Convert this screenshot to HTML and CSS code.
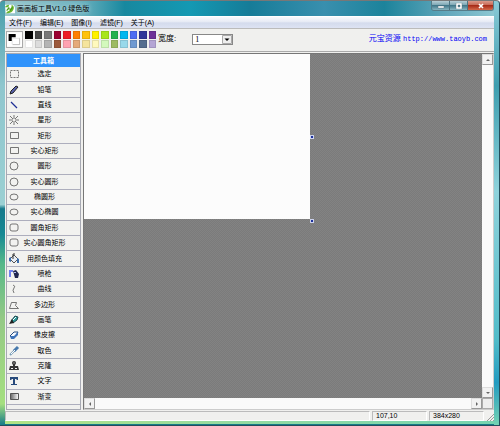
FILE: index.html
```html
<!DOCTYPE html>
<html lang="zh-CN">
<head>
<meta charset="utf-8">
<title>画画板工具V1.0 绿色版</title>
<link rel="stylesheet" href="styles.css">
</head>
<body>
<div class="window">
  <header class="titlebar">
    <svg class="logo" viewBox="0 0 12 12" aria-hidden="true"><path fill="#fff" d="M0 1h10l2 3v7H1z"/><path fill="#69b52d" d="M0 4q1-3 5-3L4 4H0zM8 1q4 2 2 6T4 11H1l2-2q5-1 5-8"/><path fill="none" stroke="#4c9b18" stroke-width="1.3" d="M2 8l3-4M6 8l3-4M3 6h5"/></svg>
    <h1 class="title">画画板工具V1.0 绿色版</h1>
    <div class="controls">
      <button class="control" aria-label="最小化"><svg viewBox="0 0 8 6"><path class="glyph" d="M1 3h6v2H1z"/></svg></button>
      <button class="control" aria-label="最大化"><svg viewBox="0 0 8 6"><path class="glyph" fill-rule="evenodd" d="M1 0h6v6H1zM3 2v2h2V2z"/></svg></button>
      <button class="control close" aria-label="关闭"><svg viewBox="0 0 8 6"><path stroke="#fff" stroke-width="1.6" d="M2 1l4 4M6 1L2 5"/></svg></button>
    </div>
  </header>
  <div class="client">
    <nav class="menu">
      <button>文件(F)</button><button>编辑(E)</button><button>图像(I)</button><button>滤镜(F)</button><button>关于(A)</button>
    </nav>
    <div class="toolbar">
      <svg class="current" viewBox="0 0 19 18" aria-hidden="true"><path fill="#fff" d="M0 0h19v18H0z"/><path fill="none" stroke="#aaa" d="M7 15.500h9V7"/><path fill="none" stroke="#ddd" d="M6.500 15V7.500H16"/><path d="M2 2h9v4H6v5H2z"/></svg>
      <div class="palette">
        <button class="swatch black" aria-label="黑"></button><button class="swatch dark" aria-label="深灰"></button><button class="swatch gray" aria-label="灰"></button><button class="swatch maroon" aria-label="深红"></button><button class="swatch red" aria-label="红"></button><button class="swatch orange" aria-label="橙"></button><button class="swatch amber" aria-label="金"></button><button class="swatch yellow" aria-label="黄"></button><button class="swatch lime" aria-label="黄绿"></button><button class="swatch green" aria-label="绿"></button><button class="swatch sky" aria-label="天蓝"></button><button class="swatch blue" aria-label="蓝"></button><button class="swatch navy" aria-label="深蓝"></button><button class="swatch purple" aria-label="紫"></button>
        <button class="swatch white" aria-label="白"></button><button class="swatch pale" aria-label="浅灰"></button><button class="swatch silver" aria-label="银"></button><button class="swatch brown" aria-label="棕"></button><button class="swatch pink" aria-label="粉"></button><button class="swatch tan" aria-label="浅棕"></button><button class="swatch sand" aria-label="沙"></button><button class="swatch cream" aria-label="米黄"></button><button class="swatch mint" aria-label="薄荷"></button><button class="swatch olive" aria-label="橄榄"></button><button class="swatch ice" aria-label="冰蓝"></button><button class="swatch steel" aria-label="钢蓝"></button><button class="swatch slate" aria-label="灰蓝"></button><button class="swatch lilac" aria-label="淡紫"></button>
      </div>
      <label class="width-label" for="line-width">宽度:</label>
      <div class="select-box">
        <select id="line-width"><option>1</option><option>2</option><option>3</option></select>
        <svg viewBox="0 0 10 9" aria-hidden="true"><path fill="#eee" stroke="#aaa" d="M.5.5h9v8h-9z"/><path d="M2.500 3.500h5L5 6z"/></svg>
      </div>
      <a class="site" href="http://www.taoyb.com">元宝资源 <span class="url">http://www.taoyb.com</span></a>
    </div>
    <main class="main">
      <aside class="toolbox">
        <h2>工具箱</h2>
        <div class="tools">
          <button><svg viewBox="0 0 12 12"><path class="line" stroke-dasharray="2 1" d="M2.500 2.500h8v7h-8z"/></svg><span>选定</span></button>
          <button><svg viewBox="0 0 12 12"><path fill="#5862ad" stroke="#222" d="M2 10l1-3 5-5 2 1-5 6z"/></svg><span>铅笔</span></button>
          <button><svg viewBox="0 0 12 12"><path stroke="#1f2f96" stroke-width="1.200" d="M3 3l6 6"/></svg><span>直线</span></button>
          <button><svg viewBox="0 0 12 12"><path class="line" d="M6 1v4M6 7v4M1 6h4M7 6h4M2 2l3 3M7 7l3 3M10 2L7 5M5 7l-3 3"/></svg><span>星形</span></button>
          <button><svg viewBox="0 0 12 12"><path class="line" d="M2.500 2.500h8v6h-8z"/></svg><span>矩形</span></button>
          <button><svg viewBox="0 0 12 12"><path class="line" d="M2.500 2.500h8v6h-8z"/></svg><span>实心矩形</span></button>
          <button><svg viewBox="0 0 12 12"><circle class="line" cx="6" cy="6" r="4"/></svg><span>圆形</span></button>
          <button><svg viewBox="0 0 12 12"><circle class="line" cx="6" cy="6" r="4"/></svg><span>实心圆形</span></button>
          <button><svg viewBox="0 0 12 12"><ellipse class="line" cx="6" cy="6" rx="4" ry="3"/></svg><span>椭圆形</span></button>
          <button><svg viewBox="0 0 12 12"><ellipse class="line" cx="6" cy="6" rx="4" ry="3"/></svg><span>实心椭圆</span></button>
          <button><svg viewBox="0 0 12 12"><rect class="line" x="2" y="2" width="8" height="7" rx="2"/></svg><span>圆角矩形</span></button>
          <button><svg viewBox="0 0 12 12"><rect class="line" x="2" y="2" width="8" height="7" rx="2"/></svg><span>实心圆角矩形</span></button>
          <button><svg viewBox="0 0 12 12"><path fill="#e9eef5" stroke="#555" d="M2 6l4-4 4 4-4 4z"/><path fill="none" stroke="#333" d="M5 6V1h2"/><path fill="#3a6cab" d="M1 5l2-1v5l-2-1zM9 5l2 1v4H9z"/></svg><span>用颜色填充</span></button>
          <button><svg viewBox="0 0 12 12"><path fill="#7181ee" d="M1 2h4v2H3v5H1z"/><path fill="#20264f" d="M5 3l3-1 3 4-1 4H7z"/><path fill="#aeb9f2" d="M6 4h2v1H6z"/></svg><span>喷枪</span></button>
          <button><svg viewBox="0 0 12 12"><path class="line" d="M5 2q3 1 1 3t0 5"/></svg><span>曲线</span></button>
          <button><svg viewBox="0 0 12 12"><path class="line" d="M1.500 9.500l2-6h5l-1 3 3 3z"/></svg><span>多边形</span></button>
          <button><svg viewBox="0 0 12 12"><path fill="#2c9d9d" stroke="#204850" d="M3 7l4-5 3 1-1 3-4 3z"/><path fill="#222" d="M1 10l3-5 2 4z"/><path stroke="#fff" d="M5 6l3-3"/></svg><span>画笔</span></button>
          <button><svg viewBox="0 0 12 12"><path fill="#f5f9ff" stroke="#244b80" d="M2 7l4-4h4L7 8H3z"/><path fill="#3f73b8" d="M2 7h4l4-4v3L6 10H3z"/></svg><span>橡皮擦</span></button>
          <button><svg viewBox="0 0 12 12"><path stroke="#7d9fb8" stroke-width="2" d="M2 10l5-5"/><path stroke="#4779ad" stroke-width="3" d="M6 6l4-4"/><path stroke="#fff" d="M3 9l4-4"/></svg><span>取色</span></button>
          <button><svg viewBox="0 0 12 12"><circle cx="6" cy="3" r="2" fill="#333"/><path fill="#333" d="M5 4h2v2h3l1 4H1l1-4h3z"/><path fill="#eee" d="M5.500 2.500h1v1h-1zM3 8h2v1H3zM7 8h2v1H7z"/></svg><span>克隆</span></button>
          <button><svg viewBox="0 0 12 12"><path fill="#284a7c" d="M2 2h8v3H9L8 4H7v5h2v1H3V9h2V4H4L3 5H2z"/></svg><span>文字</span></button>
          <button><svg viewBox="0 0 12 12"><defs><linearGradient id="fade"><stop stop-color="#666"/><stop offset="1" stop-color="#fff"/></linearGradient></defs><path fill="url(#fade)" stroke="#555" d="M2.500 2.500h8v6h-8z"/></svg><span>渐变</span></button>
        </div>
      </aside>
      <section class="workspace">
        <div class="viewport">
          <div class="canvas"><i class="handle side"></i><i class="handle corner"></i></div>
        </div>
        <div class="scroll vertical">
          <button aria-label="向上"><svg viewBox="0 0 8 8"><path d="M2 5l2-2 2 2z"/></svg></button>
          <button aria-label="向下"><svg viewBox="0 0 8 8"><path d="M2 3l2 2 2-2z"/></svg></button>
        </div>
        <div class="scroll horizontal">
          <button aria-label="向左"><svg viewBox="0 0 8 8"><path d="M5 2L3 4l2 2z"/></svg></button>
          <button aria-label="向右"><svg viewBox="0 0 8 8"><path d="M3 2l2 2-2 2z"/></svg></button>
        </div>
        <div class="scroll-corner"></div>
      </section>
    </main>
    <footer class="status">
      <span class="message"></span><span class="cell">107,10</span><span class="cell size">384x280</span>
      <svg class="grip" viewBox="0 0 8 8" aria-hidden="true"><path stroke="#999" d="M1 8l7-7M4 8l4-4M7 8l1-1"/></svg>
    </footer>
  </div>
</div>
</body>
</html>
```
FILE: styles.css
```css
* { box-sizing: border-box; }
html, body { height: 100%; margin: 0; }
body {
  font: 7px/10px "Liberation Sans", "Noto Sans CJK SC", sans-serif;
  color: #000;
}
button {
  margin: 0;
  padding: 0;
  border: 0;
  background: none;
  font: inherit;
  color: inherit;
}
svg { display: block; }
h1, h2 { margin: 0; font-size: inherit; }

.window {
  min-height: 100%;
  display: flex;
  flex-direction: column;
  padding: 0 5px 4px;
  border: 1px solid #244e5c;
  border-top-color: #777;
  border-left-width: 0;
  border-radius: 4px 4px 0 0;
  background:
    linear-gradient(#469daa, #8fc6ce 20%, #9bd0d3 48%, #16798b 49%, #178994 55%, #55b889 62%, #94c985 75%, #a5df80 95%, #167b88) left / 5px 100% no-repeat,
    linear-gradient(#8bcbd7, #3e9eaf 20%, #8fd3dc 45%, #51bcc9 80%, #239bc0 90%, #73d3b3) right / 5px 100% no-repeat,
    linear-gradient(transparent 70%, #167b88 70%) bottom / 100% 4px no-repeat,
    linear-gradient(90deg, #b2e384, #96dba0 45%, #75d4b0) bottom / 100% 4px no-repeat,
    linear-gradient(90deg, #9ac7cd, #6eb2bf 16%, #17889f 25%, #1499b3 38%, #167c98 50%, #398fae 65%, #1c839b 77%, #65a9bd 90%, #91cbd5);
}
.titlebar { flex: 0 0 15px; display: flex; align-items: center; }
.logo { width: 10px; height: 10px; }
.title { margin-left: 2px; font-weight: 400; color: #000; text-shadow: 0 0 4px #d5eaee; }
.controls {
  align-self: flex-start;
  display: flex;
  height: 10px;
  margin-left: auto;
  border: 1px solid #567c89;
  border-top: 0;
  border-radius: 0 0 3px 3px;
  overflow: hidden;
}
.control {
  width: 18px;
  display: grid;
  place-items: center;
  border-right: 1px solid #4c7482;
  background: linear-gradient(#b5ced6, #78a3b0 48%, #42788a 50%, #87b5c0);
}
.control svg { width: 8px; height: 6px; }
.glyph { fill: #fff; stroke: #526b75; stroke-width: .4; }
.close {
  width: 25px;
  border: 0;
  background: linear-gradient(#db9a8a, #c56551 48%, #a72c18 50%, #d4694a);
}

.client { flex: 1; display: flex; flex-direction: column; background: #f0f0ee; }
.menu {
  flex: 0 0 13px;
  display: flex;
  gap: 8px;
  padding-left: 4px;
  border-top: 1px solid #fff;
  border-bottom: 1px solid #bbb;
  background: linear-gradient(#f8f9fc, #e8ecf6 40%, #d4dbed 55%, #dde3f3);
}
.toolbar {
  flex: 0 0 23px;
  display: flex;
  align-items: center;
  padding: 0 7px 2px 1px;
  border-bottom: 1px solid #aaa;
}
.current { width: 17px; height: 17px; border: 1px solid #aaa; }
.palette {
  display: grid;
  grid-template-columns: repeat(14, 1fr);
  grid-auto-rows: 8px;
  gap: 1px 2px;
  width: 131px;
  margin-left: 2px;
}
.swatch { border: 1px solid rgb(0 0 0 / 10%); }
.black { background: #000; } .dark { background: #464646; }
.gray { background: #787878; } .maroon { background: #99002f; }
.red { background: #ed1c24; } .orange { background: #ff7e00; }
.amber { background: #ffc20e; } .yellow { background: #fff200; }
.lime { background: #a8e61d; } .green { background: #22b14c; }
.sky { background: #00b7ef; } .blue { background: #4d6df3; }
.navy { background: #2f3699; } .purple { background: #6f3198; }
.white { background: #fff; } .pale { background: #dcdcdc; }
.silver { background: #b4b4b4; } .brown { background: #9c5a3c; }
.pink { background: #ffa3b1; } .tan { background: #e5aa7a; }
.sand { background: #f5e49c; } .cream { background: #fff9bd; }
.mint { background: #d3f9bc; } .olive { background: #9dbb61; }
.ice { background: #99d9ea; } .steel { background: #709ad1; }
.slate { background: #546d8e; } .lilac { background: #b5a5d5; }
.width-label { margin-left: 2px; font-size: 8px; }
.select-box {
  display: flex;
  align-items: center;
  width: 41px;
  height: 11px;
  margin-left: 16px;
  border: 1px solid #888;
  background: #fff;
}
.select-box select {
  flex: 1;
  min-width: 0;
  height: 9px;
  padding: 0 2px;
  border: 0;
  background: none;
  appearance: none;
  color: #000;
  font: 8px/9px "Liberation Serif", serif;
}
.select-box svg { width: 10px; height: 9px; }
.site {
  margin-left: auto;
  color: #0000f5;
  font-size: 8px;
  text-decoration: none;
  white-space: nowrap;
}
.url { font: 7px/10px "Liberation Mono", monospace; }

.main {
  flex: 1;
  display: grid;
  grid-template-columns: 75px 1fr;
  gap: 2px;
  padding: 1px 0 1px 1px;
}
.toolbox {
  display: flex;
  flex-direction: column;
  padding-bottom: 4px;
  border: 1px solid #a7a9b3;
  text-align: center;
}
.toolbox h2 { flex: 0 0 13px; background: #3093fb; color: #fff; line-height: 13px; }
.tools { flex: 1; display: grid; grid-template-rows: repeat(22, 1fr); }
.tools button {
  display: grid;
  grid-template-columns: 14px 1fr 12px;
  align-items: center;
  border-bottom: 1px solid #adaebd;
  background: #f2f2f0;
}
.tools svg { width: 12px; height: 12px; margin-left: 1px; }
.tools span { white-space: nowrap; justify-self: center; }
.line { fill: none; stroke: #555; stroke-width: .8; }
.workspace {
  display: grid;
  grid-template: 1fr 11px / 1fr 11px;
  border: 1px solid #777;
  border-right-color: #ccc;
  border-bottom-color: #ccc;
  background: #fafafa;
}
.viewport {
  background: repeating-conic-gradient(#7b7b7b 0 25%, #838383 0 50%) 0 0 / 2px 2px;
}
.canvas { position: relative; width: 226px; height: 165px; background: #fcfcfc; }
.handle {
  position: absolute;
  right: -4px;
  width: 4px;
  height: 4px;
  border: 1px solid #cbd2ee;
  background: #1c309c;
}
.side { top: 49%; }
.corner { bottom: -4px; }
.scroll { display: flex; justify-content: space-between; }
.vertical { flex-direction: column; }
.scroll button {
  width: 11px;
  height: 11px;
  display: grid;
  place-items: center;
  border: 1px solid #ddd;
  border-right-color: #999;
  border-bottom-color: #999;
  background: #f2f2f2;
}
.scroll svg { width: 8px; height: 8px; fill: #666; }
.scroll-corner { border: 1px solid #aaa; background: #eee; }
.status { flex: 0 0 10px; display: flex; gap: 2px; }
.message, .cell {
  border: 1px solid #bbb;
  border-right-color: #fff;
  border-bottom-color: #fff;
}
.message { flex: 1; }
.cell { width: 55px; padding-left: 3px; line-height: 8px; }
.grip { width: 8px; height: 8px; align-self: flex-end; }
```
